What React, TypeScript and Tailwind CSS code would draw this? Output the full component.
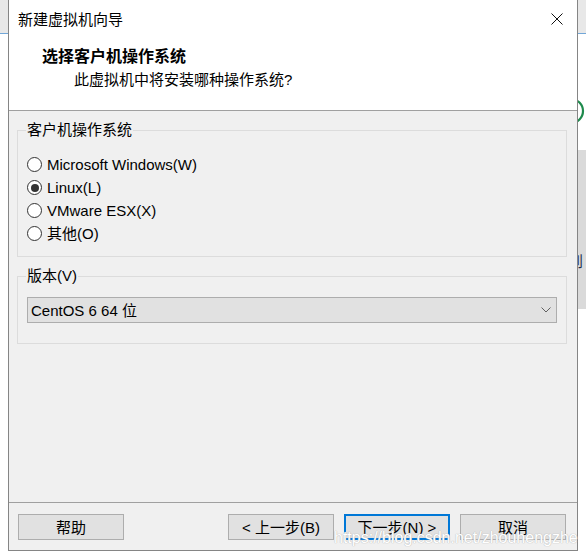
import { useState } from 'react';

const FONT = '"Liberation Sans", "Noto Sans CJK SC", sans-serif';

// Windows 10 style radio button
function Radio({ label, checked, onSelect }: { label: string; checked: boolean; onSelect: () => void }) {
  return (
    <label className="flex h-[23px] items-center gap-[5px] cursor-default" onClick={onSelect}>
      <span className="flex h-[15px] w-[15px] items-center justify-center rounded-full border border-[#333333] bg-white">
        {checked && <span className="h-[8px] w-[8px] rounded-full bg-[#333333]" />}
      </span>
      <span className="text-[15px] leading-none text-black">{label}</span>
    </label>
  );
}

function WinButton({ children, primary }: { children: React.ReactNode; primary?: boolean }) {
  return (
    <button
      className={`h-[26px] w-[106px] bg-[#e1e1e1] text-[15px] leading-none text-black ${
        primary ? 'border-2 border-[#0078d7]' : 'border border-[#adadad]'
      }`}
    >
      {children}
    </button>
  );
}

export default function App() {
  const [os, setOs] = useState('linux');

  const options = [
    { id: 'win', label: 'Microsoft Windows(W)' },
    { id: 'linux', label: 'Linux(L)' },
    { id: 'esx', label: 'VMware ESX(X)' },
    { id: 'other', label: '其他(O)' },
  ];

  return (
    <div className="relative h-[559px] w-[586px] overflow-hidden bg-white" style={{ fontFamily: FONT }}>
      {/* window behind the dialog */}
      <div className="absolute left-0 top-0 h-[33px] w-full bg-[#e8e8e8]" />
      <div className="absolute left-0 top-[33px] h-px w-full bg-[#72a7d8]" />
      <svg className="absolute left-[556px] top-[96px]" width="30" height="30" viewBox="0 0 30 30">
        <circle cx="15" cy="15" r="12" fill="none" stroke="#1e8a4c" strokeWidth="2.2" />
      </svg>
      <div className="absolute left-[560px] top-[150px] h-[159px] w-[26px] bg-[#dadada]">
        <span className="absolute left-[8px] top-[104px] text-[15px] leading-none text-[#1f2f4f]">到</span>
      </div>

      {/* dialog */}
      <div className="absolute left-[8px] top-0 flex h-[551px] w-[570px] flex-col border-x border-b border-[#858585] bg-[#f0f0f0]">
        <div className="flex h-[38px] shrink-0 items-center justify-between bg-white pl-[9px] pr-[14px]">
          <span className="text-[15px] leading-none text-black">新建虚拟机向导</span>
          <svg width="12" height="12" viewBox="0 0 12 12">
            <path d="M0.5 0.5 L11.5 11.5 M11.5 0.5 L0.5 11.5" stroke="#111" strokeWidth="1" />
          </svg>
        </div>

        <div className="flex h-[73px] shrink-0 flex-col border-b border-[#a0a0a0] bg-white">
          <div className="mt-[10px] pl-[33px] text-[16px] font-bold leading-[18px] text-black">选择客户机操作系统</div>
          <div className="mt-[5px] pl-[65px] text-[15px] leading-[18px] text-black">此虚拟机中将安装哪种操作系统?</div>
        </div>

        <div className="flex flex-1 flex-col px-[8px] pr-[10px] pt-[9px]">
          <fieldset className="border border-[#dcdcdc] px-[9px] pb-[11px]">
            <legend className="ml-[-1px] px-[1px] text-[15px] leading-[20px] text-black">客户机操作系统</legend>
            <div className="mt-[13px] flex flex-col">
              {options.map((o) => (
                <Radio key={o.id} label={o.label} checked={os === o.id} onSelect={() => setOs(o.id)} />
              ))}
            </div>
          </fieldset>

          <fieldset className="mt-[9px] border border-[#dcdcdc] px-[9px] pb-[20px]">
            <legend className="ml-[-1px] px-[1px] text-[15px] leading-[20px] text-black">版本(V)</legend>
            <div className="mt-[11px] flex h-[26px] items-center justify-between border border-[#adadad] bg-[#e1e1e1] pl-[3px] pr-[5px]">
              <span className="text-[15px] leading-none text-black">CentOS 6 64 位</span>
              <svg width="10" height="6" viewBox="0 0 10 6">
                <path d="M0.5 0.5 L5 5 L9.5 0.5" fill="none" stroke="#606060" strokeWidth="1" />
              </svg>
            </div>
          </fieldset>
        </div>

        <div className="flex h-[48px] shrink-0 items-start border-t border-[#a0a0a0] pl-[9px] pr-[11px] pt-[11px]">
          <WinButton>帮助</WinButton>
          <div className="flex-1" />
          <div className="flex gap-[10px]">
            <WinButton>&lt; 上一步(B)</WinButton>
            <WinButton primary>下一步(N) &gt;</WinButton>
            <WinButton>取消</WinButton>
          </div>
        </div>
      </div>

      {/* watermark */}
      <div
        className="pointer-events-none absolute left-[334px] top-[530px] whitespace-nowrap text-[16px] leading-none text-white"
        style={{ fontFamily: '"Liberation Sans", sans-serif', textShadow: '0 0 1px #b8b8b8, 0 0 1px #b8b8b8' }}
      >
        https://blog.csdn.net/zhouhengzhe
      </div>
    </div>
  );
}
